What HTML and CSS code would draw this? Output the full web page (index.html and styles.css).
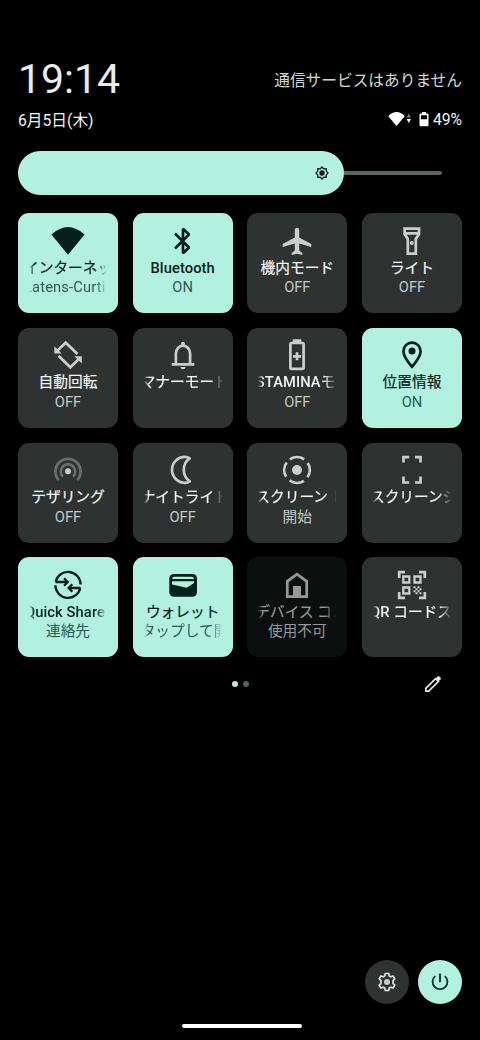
FILE: index.html
```html
<!DOCTYPE html>
<html lang="ja">
<head>
<meta charset="utf-8">
<title>クイック設定</title>
<link rel="stylesheet" href="styles.css">
</head>
<body>
<main class="panel">
  <header class="header">
    <div class="row row-clock"><div class="clock">19:14</div><div class="carrier">通信サービスはありません</div></div>
    <div class="row row-date">
      <div class="date">6月5日(木)</div>
      <div class="status">
        <svg class="st-wifi" viewBox="0 0 24 16"><path d="M8.500 15 .3 5.200Q8.500-3 16.700 5.200Z" fill="#fff"/><path d="m20.800 2.500 2.200 4h-4.400z" fill="#777"/><path d="M18.600 8h4.400l-2.200 4z" fill="#fff"/></svg>
        <svg class="st-batt" viewBox="0 0 10 15"><path d="M3 0h4v1.500h1.300q1.200 0 1.200 1.200V13q0 1.200-1.200 1.200H1.700Q.5 14.200.5 13V2.700q0-1.200 1.200-1.200H3zM2 3.200v4h6v-4z" fill="#fff" fill-rule="evenodd"/></svg>
        <span>49%</span>
      </div>
    </div>
  </header>

  <div class="slider">
    <div class="slider-fill">
      <svg class="sun" viewBox="0 0 14 14"><path d="M7 1l1.700 1.800 2.500-.2.100 2.500L13 7l-1.700 1.900-.1 2.500-2.500-.2L7 13l-1.700-1.800-2.500.2-.1-2.500L1 7l1.700-1.900.1-2.500 2.500.2z" fill="none" stroke="#06201a" stroke-width="1.300"/><circle cx="7" cy="7" r="2.700" fill="#06201a"/></svg>
    </div>
    <div class="slider-track"></div>
  </div>

  <section class="grid">
    <div class="tile on">
      <svg class="icon" viewBox="0 0 36 36"><path class="solid" d="M18 31.700 1.400 11.500Q18-3.500 34.600 11.500Z"/></svg>
      <div class="clip both"><span class="label o-net">インターネッ</span></div>
      <div class="clip both"><span class="sub o-ssid">Latens-Curti</span></div>
    </div>
    <div class="tile on">
      <svg class="icon" viewBox="0 0 36 36"><path d="M10 10.500 24 24.500 18 30.200V5.800L24 11.500 10 25.500" stroke-linejoin="bevel"/></svg>
      <div class="clip mid"><span class="label latin">Bluetooth</span></div>
      <div class="clip mid"><span class="sub">ON</span></div>
    </div>
    <div class="tile">
      <svg class="icon" viewBox="0 0 36 36"><path class="solid" d="M18 4.700q2.200 0 2.200 2.300v7.500L32.300 21v3l-12.100-3.500v7l3.100 2.500v2L18 30.800 12.700 32v-2l3.100-2.500v-7L3.700 24v-3l12.100-6.500V7q0-2.300 2.200-2.300z"/></svg>
      <div class="clip mid"><span class="label">機内モード</span></div>
      <div class="clip mid"><span class="sub">OFF</span></div>
    </div>
    <div class="tile">
      <svg class="icon" viewBox="0 0 36 36"><path d="M10.600 5.700H25V11l-3.200 5v14.600h-8V16l-3.200-5zM10.600 10.300H25"/><circle class="solid" cx="17.800" cy="20" r="2"/></svg>
      <div class="clip mid"><span class="label">ライト</span></div>
      <div class="clip mid"><span class="sub">OFF</span></div>
    </div>

    <div class="tile">
      <svg class="icon" viewBox="0 0 36 36"><path d="M27.500 17 15.700 5.700 7 14M8.500 18.800 20.300 30.300 29 22"/><path class="solid" d="M4.300 9.300v7.300h7.500zM31.800 26.500v-7.300h-7.500z"/></svg>
      <div class="clip mid"><span class="label">自動回転</span></div>
      <div class="clip mid"><span class="sub">OFF</span></div>
    </div>
    <div class="tile">
      <svg class="icon" viewBox="0 0 36 36"><path d="M10.900 27V16.500a7.100 7.800 0 0 1 14.200 0V27M6.700 27.300h22.600"/><circle class="solid" cx="18" cy="6.800" r="2"/><path class="solid" d="M15.300 29.900h5.400q-.4 2.300-2.700 2.300t-2.700-2.300z"/></svg>
      <div class="clip both"><span class="label o-manner">マナーモード</span></div>
    </div>
    <div class="tile">
      <svg class="icon" viewBox="0 0 36 36"><rect x="11.400" y="6" width="13.200" height="25.900" rx="1"/><path d="M18 15.300v8M14 19.300h8"/><path class="solid" d="M13.700 2.300h8.600V5h-8.600z"/></svg>
      <div class="clip both"><span class="label o-stamina"><b class="latin">STAMINA</b>モ</span></div>
      <div class="clip mid"><span class="sub">OFF</span></div>
    </div>
    <div class="tile on">
      <svg class="icon" viewBox="0 0 36 36"><path d="M18 29.800c-6-7-8.600-11.300-8.600-15.600a8.600 8.600 0 0 1 17.200 0c0 4.300-2.600 8.600-8.600 15.600z"/><circle class="solid" cx="18" cy="14" r="3.500"/></svg>
      <div class="clip mid"><span class="label">位置情報</span></div>
      <div class="clip mid"><span class="sub">ON</span></div>
    </div>

    <div class="tile">
      <svg class="icon" viewBox="0 0 36 36"><path class="faint" d="M8.700 28a12.600 12.600 0 1 1 18.600 0M13 24.600a7.200 7.200 0 1 1 10 0"/><circle class="solid" cx="18" cy="19.300" r="3"/></svg>
      <div class="clip mid"><span class="label">テザリング</span></div>
      <div class="clip mid"><span class="sub">OFF</span></div>
    </div>
    <div class="tile">
      <svg class="icon" viewBox="0 0 36 36"><path stroke-linejoin="round" d="M24.800 6.300Q22.500 4.800 20 4.800a13 13 0 0 0 0 26q2.500 0 4.800-1.500c-8-5-8-18 0-23z"/></svg>
      <div class="clip both"><span class="label o-night">ナイトライト</span></div>
      <div class="clip mid"><span class="sub">OFF</span></div>
    </div>
    <div class="tile">
      <svg class="icon" viewBox="0 0 36 36"><circle cx="18" cy="18" r="12.800" stroke-dasharray="15.100 5.006" transform="rotate(-123.800 18 18)"/><circle class="solid" cx="18" cy="18" r="5"/></svg>
      <div class="clip both"><span class="label o-rec">スクリーン レ</span></div>
      <div class="clip mid"><span class="sub">開始</span></div>
    </div>
    <div class="tile">
      <svg class="icon" viewBox="0 0 36 36"><path d="M9.500 10.500V5.200h5.700M21 5.200h5.500v5.300M26.500 24.500v6H21M15.200 30.500H9.500v-6"/></svg>
      <div class="clip both"><span class="label o-shot">スクリーンシ</span></div>
    </div>

    <div class="tile on">
      <svg class="icon" viewBox="0 0 36 36"><path d="M5.700 14.800A12.600 12.600 0 0 1 30.600 17.500M30.300 21A12.600 12.600 0 0 1 5.400 18.300M5.500 15H17M14 11.300l3.700 3.700-3.700 3.700M30.500 21H19M22.300 17.300 18.600 21l3.700 3.700" stroke-width="2.300"/></svg>
      <div class="clip both"><span class="label latin o-share">Quick Share</span></div>
      <div class="clip mid"><span class="sub">連絡先</span></div>
    </div>
    <div class="tile on">
      <svg class="icon" viewBox="0 0 36 36"><rect class="solid" x="4.300" y="7" width="27.700" height="22.700" rx="4.500"/><path class="cut" d="M7 12.100q.3-2.300 2.500-2.300h17q2.200 0 2.500 2.300zM7 14.300h22V16l-6.500 4.300q-1 .6-2.200.3L7 17.600z"/></svg>
      <div class="clip mid"><span class="label">ウォレット</span></div>
      <div class="clip both"><span class="sub o-tap">タップして開</span></div>
    </div>
    <div class="tile disabled">
      <svg class="icon" viewBox="0 0 36 36"><path d="M8.300 29.700V14.300L18 7.200l9.700 7.100v15.400z"/><path class="solid" d="M14 19h8v11h-8z"/></svg>
      <div class="clip both"><span class="label o-dev">デバイス コン</span></div>
      <div class="clip mid"><span class="sub">使用不可</span></div>
    </div>
    <div class="tile">
      <svg class="icon" viewBox="0 0 36 36"><path d="M5.200 11V5.200H11M25 5.200h5.800V11M30.800 25v5.800H25M11 30.800H5.200V25"/><path stroke-width="2.300" d="M9.300 9.500h6v6h-6zM20.500 9.500h6v6h-6zM9.300 20.500h6v6h-6z"/><path class="solid" d="M19.500 19.300h2v2h-2zM23.500 19.300h2v2h-2zM21.500 21.300h2v2h-2zM25.500 21.300h2v2h-2zM19.500 23.300h2v2h-2zM23.500 23.300h2v2h-2zM21.500 25.300h2v2h-2zM25.500 25.300h2v2h-2z"/></svg>
      <div class="clip both"><span class="label o-qr"><b class="latin">QR</b> コードス</span></div>
    </div>
  </section>

  <div class="pager">
    <div class="dots"><i class="dot current"></i><i class="dot"></i></div>
    <svg class="pencil" viewBox="0 0 18 18"><path d="M1.800 16.200v-2.900L11.500 3.600l2.900 2.900-9.700 9.700z" fill="none" stroke="#e4e6e5" stroke-width="1.700"/><path d="m11.700 3.400 1.900-1.900q.9-.8 1.800 0l1.100 1.100q.8.900 0 1.800l-1.900 1.900z" fill="#e4e6e5"/></svg>
  </div>

  <footer class="footer">
    <div class="round"><svg viewBox="0 0 20 20"><path d="M8.300 1.500h3.400l.5 2.400 1.600.9 2.300-.8 1.700 2.900L16 8.600v2.800l1.800 1.700-1.700 2.900-2.300-.8-1.600.9-.5 2.400H8.300l-.5-2.400-1.600-.9-2.300.8-1.700-2.900L4 11.400V8.600L2.200 6.900 3.900 4l2.300.8 1.600-.9z" fill="none" stroke="#dfe3e1" stroke-width="1.700" stroke-linejoin="round"/><circle cx="10" cy="10" r="3" fill="#c8cccb"/></svg></div>
    <div class="round power"><svg viewBox="0 0 20 20"><path d="M10 1.500v8.800M5.200 4.100a7.400 7.400 0 1 0 9.600 0" fill="none" stroke="#12352c" stroke-width="1.900"/></svg></div>
  </footer>
  <div class="home"></div>
</main>
</body>
</html>
```
FILE: styles.css
```css
* { box-sizing: border-box; }
body { margin: 0; background: #000; overflow: hidden; }
.panel {
  width: 480px; height: 1040px; padding: 55px 18px 0;
  display: flex; flex-direction: column;
  background: #000; color: #f1f3f2;
  font-family: Roboto, "Noto Sans CJK JP", sans-serif;
}
.row { display: flex; justify-content: space-between; align-items: center; white-space: nowrap; }
.row-clock { height: 48px; }
.row-date { height: 32px; font-size: 15.700px; }
.clock { font-size: 41px; line-height: 48px; font-weight: 400; color: #e9ebea; }
.carrier { font-size: 15.700px; color: #d5d8d7; }
.status { display: flex; align-items: center; }
.st-wifi { width: 24px; height: 16px; margin-right: 7px; }
.st-batt { width: 10px; height: 15px; margin-right: 4px; }

.slider { display: flex; align-items: center; height: 44px; margin-top: 16.300px; }
.slider-fill {
  display: flex; align-items: center; justify-content: flex-end;
  width: 325.500px; height: 44px; padding-right: 15px;
  border-radius: 22px; background: #b2f1e0;
}
.sun { width: 14px; height: 14px; }
.slider-track { width: 98px; height: 4px; border-radius: 0 2px 2px 0; background: #606463; }

.grid {
  display: grid; grid-template-columns: repeat(4, 100px); grid-auto-rows: 100px;
  gap: 14.670px; margin-top: 18px;
}
.tile {
  --fg: #c8cfcc; --bg: #2e3230;
  display: flex; flex-direction: column; align-items: center;
  padding-top: 9.500px; border-radius: 11px;
  background: var(--bg); color: #f3f5f4;
}
.on { --fg: #06201a; --bg: #b2f1e0; color: #06201a; }
.disabled { --fg: #969b99; --bg: #0b0f0e; color: #969b99; }
.icon { width: 36px; height: 36px; flex: none; fill: none; stroke: var(--fg); stroke-width: 2.700; }
.icon .solid { fill: var(--fg); stroke: none; }
.icon .cut { fill: var(--bg); stroke: none; }
.icon .faint { stroke: #6a706d; }
.clip { display: flex; width: 78px; height: 20px; margin-bottom: -.5px; overflow: hidden; white-space: nowrap; line-height: 19px; font-size: 14.700px; }
.mid { justify-content: center; }
.both {
  -webkit-mask-image: linear-gradient(90deg, transparent, #000 5px, #000 66px, transparent 79px);
  mask-image: linear-gradient(90deg, transparent, #000 5px, #000 66px, transparent 79px);
}
.label { flex: none; -webkit-text-stroke: .2px currentColor; }
.latin { font-weight: 500; letter-spacing: .1px; -webkit-text-stroke: 0; }
.sub { flex: none; color: #c4cac7; }
.on .sub { color: #2c5a4d; }
.disabled .sub { color: #969b99; }
.o-net { margin-left: -5px; }
.o-ssid { margin-left: -5px; letter-spacing: .15px; }
.o-manner, .o-night, .o-rec, .o-shot, .o-tap, .o-dev, .o-qr { margin-left: -3px; }
.o-stamina { margin-left: -2.500px; }
.o-share { margin-left: -4px; }

.pager { display: grid; grid-template-columns: 1fr auto 1fr; align-items: center; height: 22px; margin-top: 16px; }
.dots { grid-column: 2; display: flex; gap: 5px; }
.dot { width: 6px; height: 6px; border-radius: 50%; background: #4b6961; }
.dot.current { background: #b2f1e0; }
.pencil { width: 18px; height: 18px; justify-self: end; margin-right: 20px; }

.footer { display: flex; justify-content: flex-end; gap: 9.500px; margin-top: auto; }
.round { display: flex; align-items: center; justify-content: center; width: 44px; height: 44px; border-radius: 50%; background: #2e3230; }
.round svg { width: 20px; height: 20px; }
.power { background: #b2f1e0; }
.home { flex: none; width: 120px; height: 4px; margin: 20px 160px 12px 164px; border-radius: 2px; background: #fff; }
```
